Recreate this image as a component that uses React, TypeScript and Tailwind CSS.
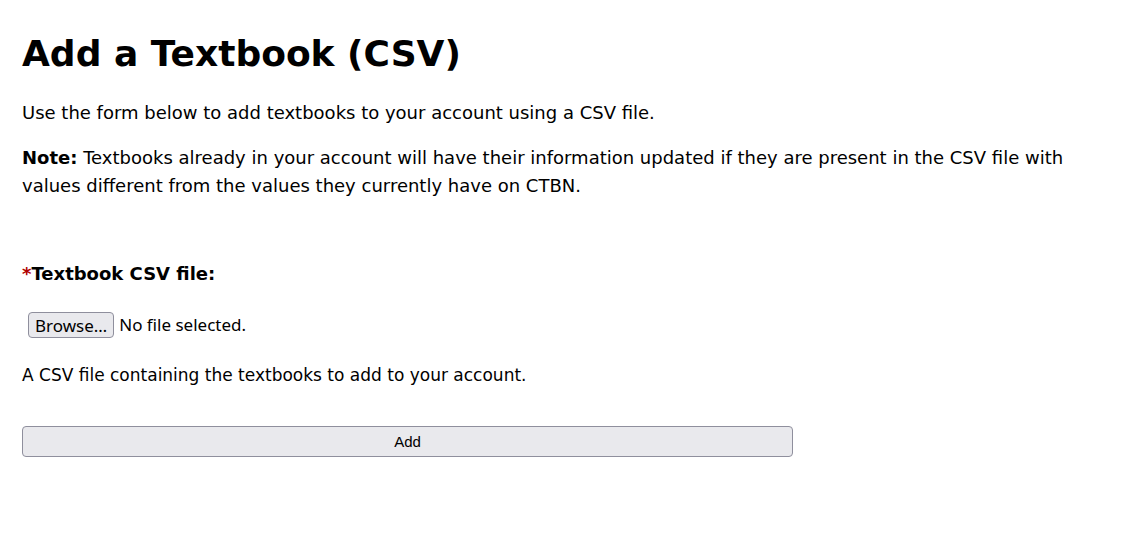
export default function App() {
  return (
    <div className="min-h-screen bg-white px-[22px] pt-[30px] text-black" style={{ fontFamily: '"DejaVu Sans", sans-serif' }}>
      <h1 className="text-[36px] font-bold leading-[48px]">Add a Textbook (CSV)</h1>
      <p className="mt-[21px] text-[18px] leading-[28px]">
        Use the form below to add textbooks to your account using a CSV file.
      </p>
      <p className="mt-[17px] text-[18px] leading-[28px]">
        <strong>Note:</strong> Textbooks already in your account will have their information updated if they are present in the CSV file with values different from the values they currently have on CTBN.
      </p>
      <form className="mt-[60px] w-[771px]" onSubmit={(e) => e.preventDefault()}>
        <label className="block text-[18px] font-bold leading-[28px]">
          <span className="text-[#b00000]">*</span>Textbook CSV file:
        </label>
        <div className="mt-[24px] flex items-center gap-[5px] pl-[6px]">
          <button
            type="button"
            className="h-[26px] rounded-[4px] border border-[#8f8f9d] bg-[#e9e9ed] px-[6px] text-[17px] leading-none"
            style={{ fontFamily: '"Noto Sans", sans-serif' }}
          >
            Browse…
          </button>
          <span className="text-[17px]" style={{ fontFamily: '"Noto Sans", sans-serif' }}>No file selected.</span>
        </div>
        <p className="mt-[23px] text-[17px] leading-[28px]">A CSV file containing the textbooks to add to your account.</p>
        <button
          type="submit"
          className="mt-[37px] block h-[31px] w-full rounded-[4px] border border-[#8f8f9d] bg-[#e9e9ed] pt-[2px] text-[15px]"
          style={{ fontFamily: '"Liberation Sans", sans-serif' }}
        >
          Add
        </button>
      </form>
    </div>
  );
}
